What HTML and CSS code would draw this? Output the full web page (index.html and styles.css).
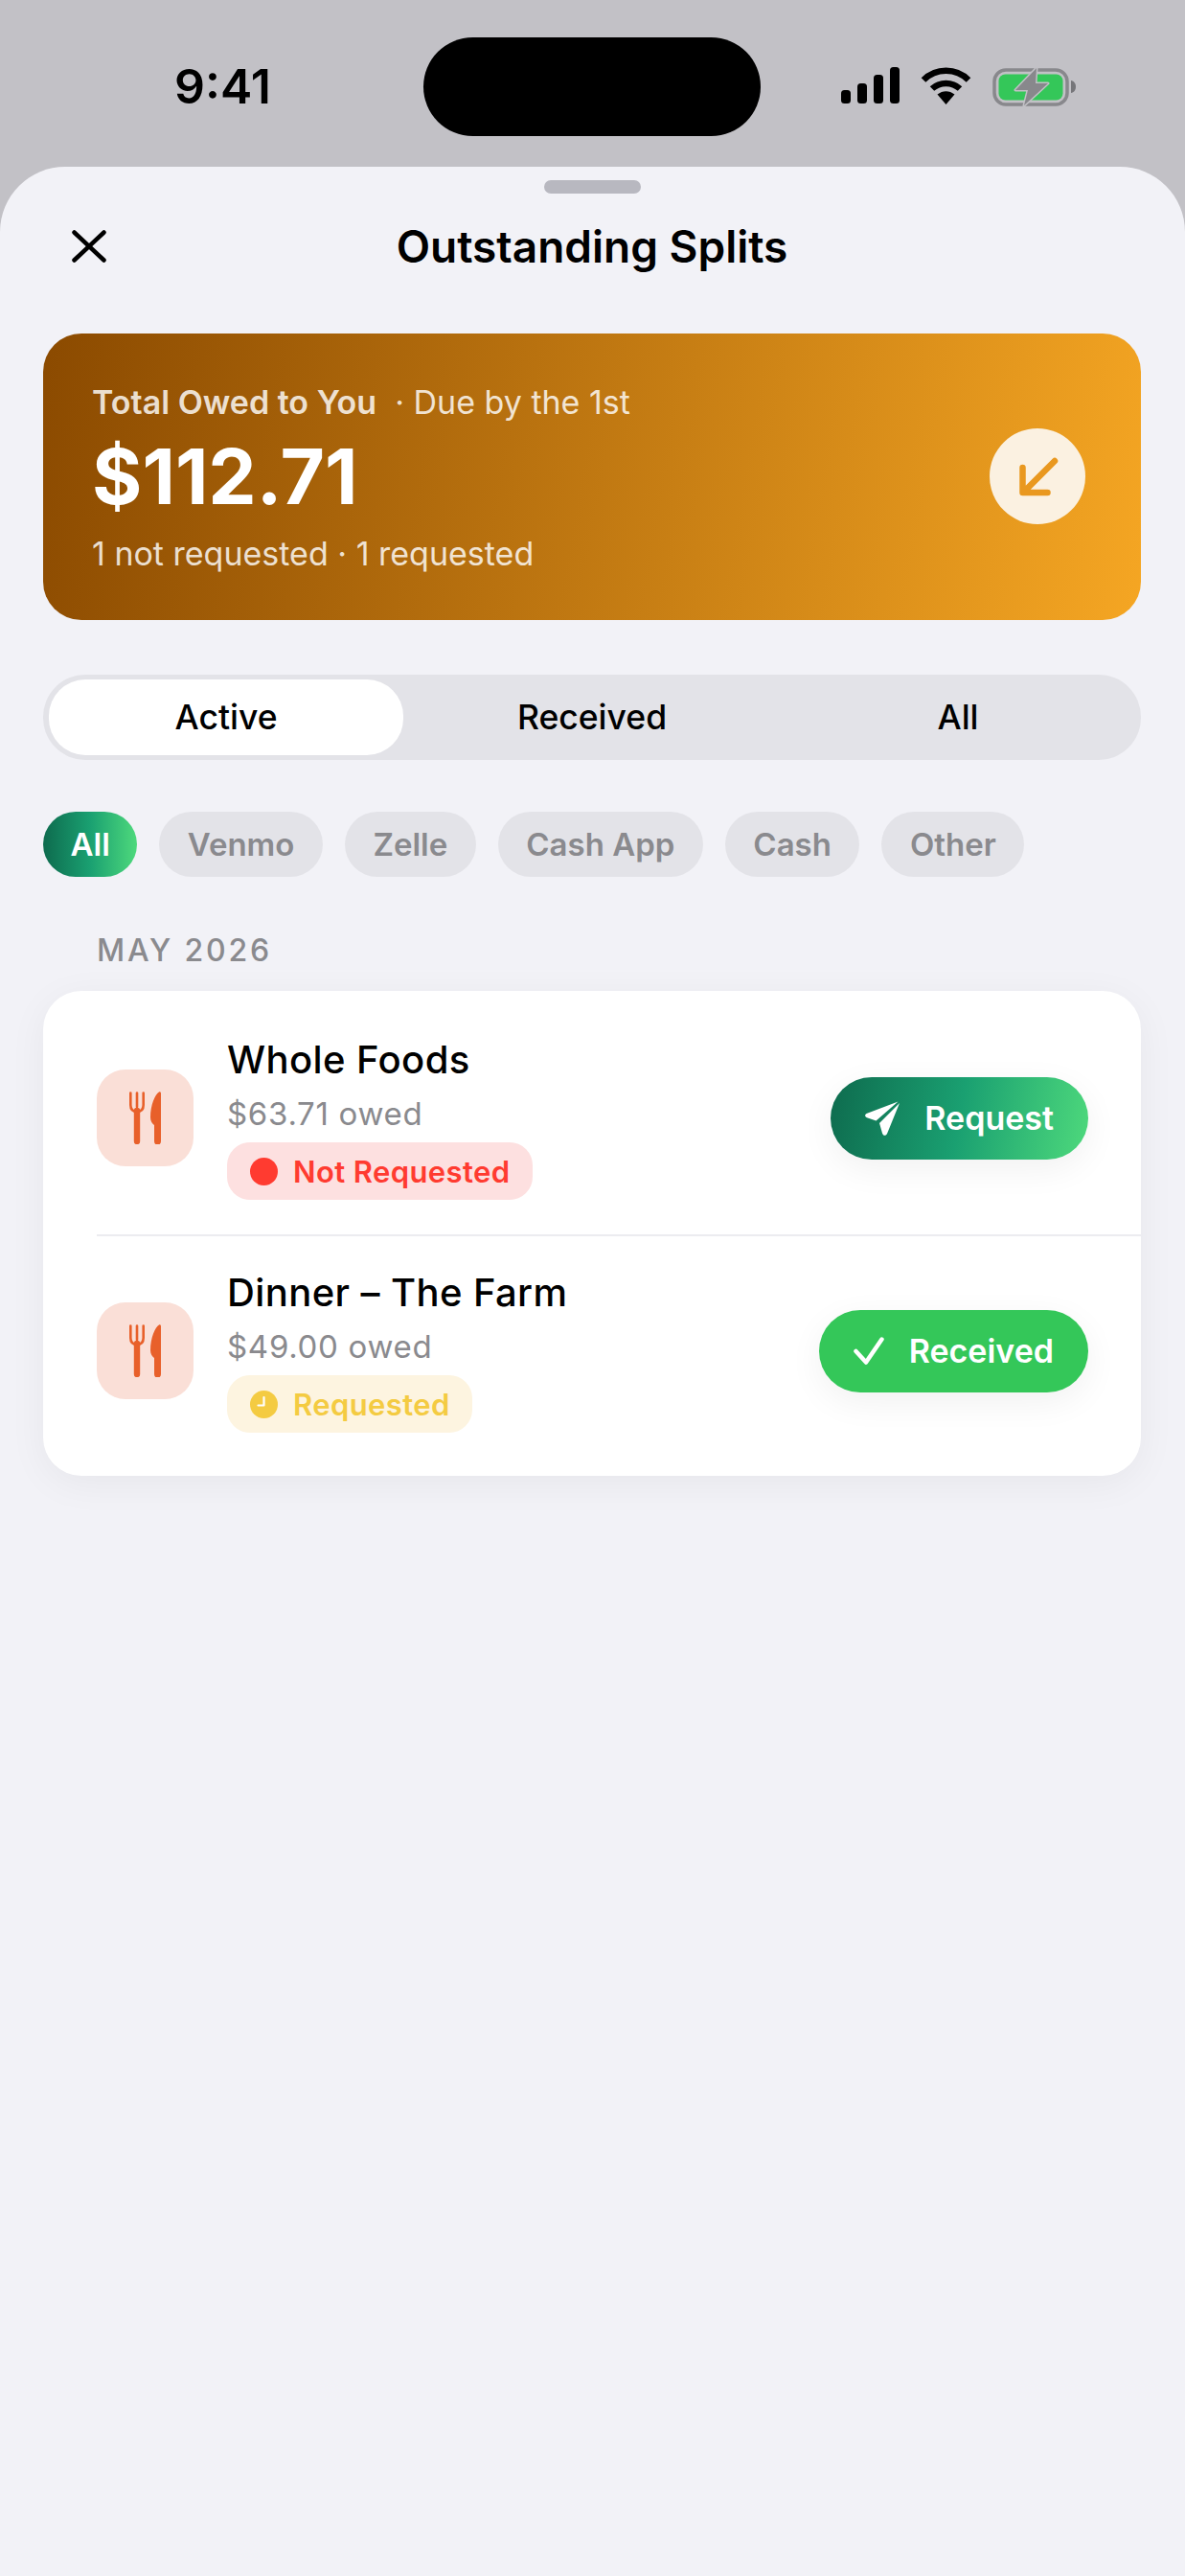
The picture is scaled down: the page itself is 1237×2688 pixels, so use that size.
FILE: index.html
```html
<!DOCTYPE html>
<html lang="en">
<head>
  <meta charset="UTF-8" />
  <meta name="viewport" content="width=device-width, initial-scale=1" />
  <title>Outstanding Splits</title>
  <link rel="stylesheet" href="styles.css">
</head>
<body>

<div class="status-bar">
  <div class="status-time">9:41</div>
  <div class="island"></div>
  <div class="status-icons">
    <svg class="signal" viewBox="0 0 61 38" width="61" height="38">
      <rect x="0" y="24" width="10" height="14" rx="3.5"/>
      <rect x="17" y="17" width="10" height="21" rx="3.5"/>
      <rect x="34" y="8" width="10" height="30" rx="3.5"/>
      <rect x="51" y="0" width="10" height="38" rx="3.5"/>
    </svg>
    <svg class="wifi" viewBox="0 0 53 39" width="53" height="39">
      <path d="M3 13.5C16 .5 37 .5 50 13.5" fill="none" stroke="#000" stroke-width="6.5"/>
      <path d="M12 22.5C20 15 33 15 41 22.5" fill="none" stroke="#000" stroke-width="6.5"/>
      <path d="M17.5 28.5C23 24 30 24 35.5 28.5L26.5 39Z"/>
    </svg>
    <svg class="battery" viewBox="0 0 87 41" width="87" height="41">
      <rect x="2" y="3" width="76" height="36" rx="12" fill="none" stroke="#88888c" stroke-width="3.5"/>
      <rect x="6.5" y="7.5" width="67" height="27" rx="7" fill="#34c759"/>
      <path d="M82 14c3 .5 5 3 5 6.500s-2 6-5 6.500z" fill="#76767a"/>
      <path d="M46 1L24 24H37L33 40L58 17H45Z" fill="#88888c" stroke="#c2c1c6" stroke-width="3" paint-order="stroke" stroke-linejoin="round"/>
    </svg>
  </div>
</div>

<div class="sheet">
  <div class="grabber"></div>

  <div class="sheet-header">
    <svg class="close-icon" viewBox="0 0 36 34" width="36" height="34">
      <path d="M2.500 2.500L33.500 31.500M33.500 2.500L2.500 31.500" fill="none" stroke="#000" stroke-width="4.500" stroke-linecap="round"/>
    </svg>
    <h1>Outstanding Splits</h1>
  </div>

  <div class="hero">
    <div class="hero-text">
      <div class="hero-label"><b>Total Owed to You</b><span>&nbsp; · Due by the 1st</span></div>
      <div class="hero-amount">$112.71</div>
      <div class="hero-sub">1 not requested · 1 requested</div>
    </div>
    <div class="hero-circle">
      <svg viewBox="0 0 100 100" width="100" height="100">
        <path d="M68 34L36 66M34.500 41V67H60.500" fill="none" stroke="#e9981f" stroke-width="6.500" stroke-linecap="round" stroke-linejoin="round"/>
      </svg>
    </div>
  </div>

  <div class="segments">
    <div class="segment active">Active</div>
    <div class="segment">Received</div>
    <div class="segment">All</div>
  </div>

  <div class="chips">
    <div class="chip active">All</div>
    <div class="chip">Venmo</div>
    <div class="chip">Zelle</div>
    <div class="chip">Cash App</div>
    <div class="chip">Cash</div>
    <div class="chip">Other</div>
  </div>

  <div class="month">MAY 2026</div>

  <div class="card">
    <div class="row">
      <div class="tile">
        <svg viewBox="0 0 33 55" width="33" height="55">
          <path d="M1.300 1.500V14C1.300 19 4 21 8 21S14.700 19 14.700 14V1.500M8 1.500V16" fill="none" stroke="#e8602a" stroke-width="2.600" stroke-linecap="round"/>
          <path d="M8 20V52" fill="none" stroke="#e8602a" stroke-width="6.400" stroke-linecap="round"/>
          <path d="M33 2V52A3.300 3.300 0 0 1 26 52V35C24 33.500 22 31 22 27 22 14 27 3 31 .5 32.500 0 33 1 33 2Z" fill="#e8602a"/>
        </svg>
      </div>
      <div class="row-text">
        <div class="row-title">Whole Foods</div>
        <div class="row-sub">$63.71 owed</div>
        <div class="badge badge-red"><span class="dot"></span>Not Requested</div>
      </div>
      <div class="btn btn-request">
        <svg viewBox="0 0 36 36" width="36" height="36">
          <path d="M34.500.5L1.500 13C-.5 14-.3 16.500 2 17.300L11.500 20.500Z" fill="#fff"/>
          <path d="M36 2L15 23L18 33.500C19 36.500 21.800 36.500 23 34Z" fill="#fff"/>
        </svg>
        Request
      </div>
    </div>
    <div class="divider"></div>
    <div class="row">
      <div class="tile">
        <svg viewBox="0 0 33 55" width="33" height="55">
          <path d="M1.300 1.500V14C1.300 19 4 21 8 21S14.700 19 14.700 14V1.500M8 1.500V16" fill="none" stroke="#e8602a" stroke-width="2.600" stroke-linecap="round"/>
          <path d="M8 20V52" fill="none" stroke="#e8602a" stroke-width="6.400" stroke-linecap="round"/>
          <path d="M33 2V52A3.300 3.300 0 0 1 26 52V35C24 33.500 22 31 22 27 22 14 27 3 31 .5 32.500 0 33 1 33 2Z" fill="#e8602a"/>
        </svg>
      </div>
      <div class="row-text">
        <div class="row-title">Dinner – The Farm</div>
        <div class="row-sub">$49.00 owed</div>
        <div class="badge badge-yellow">
          <svg class="dot-clock" viewBox="0 0 29 29" width="29" height="29">
            <circle cx="14.500" cy="14.500" r="14.500" fill="#f4cb42"/>
            <path d="M14.500 7V15.500H8.500" fill="none" stroke="#fff" stroke-width="2.200" stroke-linecap="round" stroke-linejoin="round"/>
          </svg>
          Requested
        </div>
      </div>
      <div class="btn btn-received">
        <svg viewBox="0 0 32 29" width="32" height="29">
          <path d="M2.500 15L13 26.500L29.500 2.500" fill="none" stroke="#fff" stroke-width="4.500" stroke-linecap="round" stroke-linejoin="round"/>
        </svg>
        Received
      </div>
    </div>
  </div>
</div>

</body>
</html>
```

FILE: styles.css
```css
* {
  box-sizing: border-box;
}
body {
  font-family: Inter, "Liberation Sans", sans-serif;
  background: #c2c1c6;
  color: #000;
  margin: 0;
  min-height: 100vh;
  display: flex;
  flex-direction: column;
}

/* status bar */
.status-bar {
  height: 174px;
  flex: none;
  padding-top: 39px;
  display: flex;
  align-items: flex-start;
}
.status-time {
  width: 442px;
  padding-left: 182px;
  margin-top: 27px;
  font-size: 50px;
  line-height: 48px;
  font-weight: 600;
}
.island {
  width: 352px;
  height: 103px;
  background: #000;
  border-radius: 52px;
}
.status-icons {
  padding-left: 84px;
  margin-top: 31px;
  display: flex;
  align-items: flex-start;
  gap: 22px;
}

/* sheet */
.sheet {
  flex: 1;
  background: #f2f2f7;
  border-radius: 68px 68px 0 0;
  padding: 14px 46px 0 45px;
}
.grabber {
  width: 101px;
  height: 14px;
  background: #b8b8c0;
  border-radius: 7px;
  margin: 0 auto;
}
.sheet-header {
  height: 110px;
  display: flex;
  align-items: center;
  justify-content: center;
  position: relative;
}
.close-icon {
  position: absolute;
  left: 30px;
  top: 38px;
}
h1 {
  margin: 0;
  font-size: 46px;
  font-weight: 600;
}

/* total card */
.hero {
  margin-top: 36px;
  height: 299px;
  border-radius: 40px;
  background: linear-gradient(100deg, #8b4a00 0%, #f5a623 100%);
  padding: 52px 58px 0 51px;
  display: flex;
  justify-content: space-between;
  color: #fff;
}
.hero-label {
  font-size: 34px;
  line-height: 40px;
  color: rgba(255, 255, 255, 0.82);
  white-space: nowrap;
}
.hero-label b {
  font-weight: 600;
}
.hero-label span {
  font-weight: 400;
}
.hero-amount {
  margin-top: 19px;
  font-size: 80px;
  line-height: 76px;
  font-weight: 700;
}
.hero-sub {
  margin-top: 23px;
  font-size: 34px;
  line-height: 40px;
  color: rgba(255, 255, 255, 0.82);
}
.hero-circle {
  width: 100px;
  height: 100px;
  margin-top: 47px;
  background: #fbf1e1;
  border-radius: 50%;
}

/* segmented control */
.segments {
  margin-top: 57px;
  height: 89px;
  background: #e3e3e8;
  border-radius: 44px;
  padding: 5px 6px;
  display: grid;
  grid-template-columns: repeat(3, 1fr);
  column-gap: 12px;
}
.segment {
  display: flex;
  align-items: center;
  justify-content: center;
  font-size: 35.5px;
  font-weight: 450;
}
.segment.active {
  background: #fff;
  border-radius: 38px;
}

/* filter chips */
.chips {
  margin-top: 54px;
  display: flex;
  gap: 23px;
}
.chip {
  height: 68px;
  padding: 0 29.5px;
  display: flex;
  align-items: center;
  background: #e3e3e8;
  border-radius: 34px;
  font-size: 33px;
  font-weight: 600;
  color: #8a8a8e;
}
.chip.active {
  padding: 0 28.5px;
  background: linear-gradient(90deg, #0e6b4e 0%, #1aa071 50%, #4ed97c 100%);
  color: #fff;
}

.month {
  margin: 57px 0 0 56px;
  font-size: 32px;
  line-height: 40px;
  font-weight: 500;
  letter-spacing: 2.8px;
  color: #8a8a8e;
}

/* list */
.card {
  margin-top: 22px;
  background: #fff;
  border-radius: 40px;
  padding: 13px 0 9px;
  box-shadow: 0 8px 40px rgba(0, 0, 0, 0.05);
}
.row {
  display: flex;
  align-items: center;
  padding: 34px 55px 36px 56px;
}
.divider {
  height: 2px;
  margin-left: 56px;
  background: #ececf0;
}
.tile {
  width: 101px;
  height: 101px;
  flex: none;
  background: #fadfd7;
  border-radius: 30px;
  display: flex;
  align-items: center;
  justify-content: center;
}
.row-text {
  flex: 1;
  margin-left: 35px;
}
.row-title {
  margin-top: 1px;
  font-size: 40px;
  line-height: 48px;
  font-weight: 550;
  letter-spacing: 0.4px;
}
.row-sub {
  margin-top: 13px;
  font-size: 33px;
  line-height: 38px;
  letter-spacing: 0.7px;
  color: #8a8a8e;
}
.badge {
  margin-top: 11px;
  height: 60px;
  width: fit-content;
  padding: 0 23px 0 24px;
  border-radius: 24px;
  display: flex;
  align-items: center;
  gap: 16px;
  font-size: 31px;
  font-weight: 600;
  letter-spacing: 0.4px;
}
.badge-red {
  background: #fde0e0;
  color: #ff3b30;
}
.badge-yellow {
  background: #fdf4e0;
  color: #f4cb42;
}
.dot {
  width: 29px;
  height: 29px;
  background: #ff3b30;
  border-radius: 50%;
}
.btn {
  height: 86px;
  border-radius: 43px;
  display: flex;
  align-items: center;
  color: #fff;
  font-size: 34px;
  font-weight: 600;
  gap: 26px;
  padding-right: 36px;
  box-shadow: 0 10px 36px rgba(0, 0, 0, 0.06);
}
.btn-request {
  padding-left: 36px;
  background: linear-gradient(100deg, #0e6b4e 0%, #1aa071 50%, #4ed97c 100%);
}
.btn-received {
  padding-left: 36px;
  background: #34c759;
}
```
